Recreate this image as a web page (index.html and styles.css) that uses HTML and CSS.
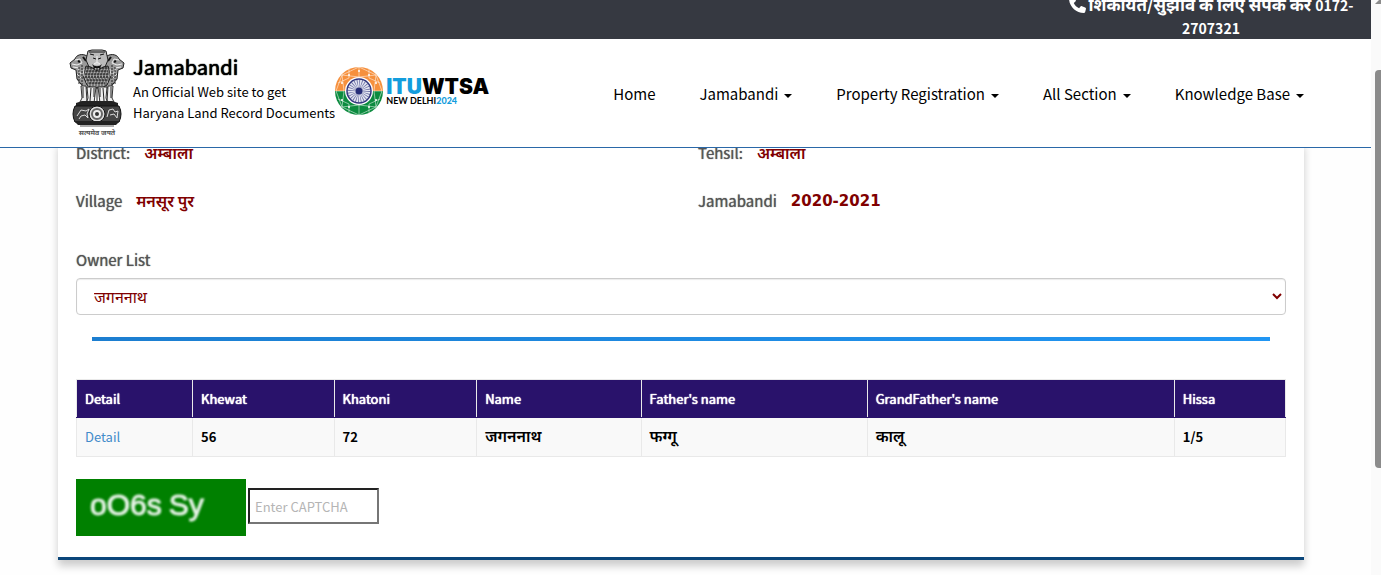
FILE: index.html
```html
<!DOCTYPE html>
<html lang="en">
<head>
    <meta charset="UTF-8">
    <meta name="viewport" content="width=device-width, initial-scale=1.0">
    <title>Jamabandi</title>
    <link rel="stylesheet" href="styles.css">
</head>
<body>
    <div class="page">
        <header class="site-header">
            <div class="topbar">
                <p class="helpline">
                    <svg class="phone" viewBox="0 0 512 512" aria-hidden="true"><path d="M164.900 24.600c-7.700-18.600-28-28.500-47.400-23.200l-88 24C12.100 30.200 0 46 0 64c0 247.400 200.600 448 448 448 18 0 33.800-12.100 38.600-29.500l24-88c5.300-19.400-4.600-39.700-23.200-47.400l-96-40c-16.300-6.800-35.200-2.100-46.300 11.600L304.700 368C234.300 334.700 177.300 277.700 144 207.300l49.300-40.300c13.700-11.200 18.400-30 11.600-46.300z"/></svg>शिकायत/सुझाव के लिए संपर्क करें <span class="number">0172-<br>2707321</span>
                </p>
            </div>
            <div class="navbar">
                <a href="#" class="brand">
                    <svg class="emblem" viewBox="0 0 56 88" role="img" aria-label="State Emblem of India">
                        <!-- side lions -->
                        <path d="M18 7C13 4 7 6 6 10L1 14l1 5 5 2 1 9 7 9h8V10z" fill="#999" stroke="#222"/>
                        <path d="M38 7c5-3 11-1 12 3l5 4-1 5-5 2-1 9-7 9h-8V10z" fill="#999" stroke="#222"/>
                        <path d="M6 11l5-1 2 4-5 2-5-1M50 11l-5-1-2 4 5 2 5-1M4 18l6 1M52 18l-6 1" fill="none" stroke="#eee"/>
                        <path d="M9 12l2 1M47 12l-2 1M14 8l3 4M42 8l-3 4" stroke="#111" stroke-width="2"/>
                        <!-- centre lion -->
                        <path d="M19 2l4-1h10l4 1 2 9-3 7-8 3-8-3-3-7z" fill="#bbb" stroke="#222"/>
                        <path d="M20 3h16M21 5l4 1M35 5l-4 1M24 9l3 1M32 9l-3 1" stroke="#111" fill="none"/>
                        <path d="M28 7v6l-3 2h6l-3-2" stroke="#eee" fill="none"/>
                        <path d="M23 15c3 3 7 3 10 0l-2 4h-6z" fill="#111"/>
                        <path d="M17 17l5 1 6 4 6-4 5-1 3 10-4 9-5 3H23l-5-3-4-9z" fill="#777" stroke="#222"/>
                        <path d="M9 20l3 5M8 25l5 5M15 20l-1 7M47 20l-3 5M48 25l-5 5M41 20l1 7" stroke="#ddd" fill="none"/>
                        <path d="M10 18v18M13 16v23M43 16v23M46 18v18" stroke="#222" stroke-dasharray="2 1"/>
                        <path d="M17 21h22M16 24h24M15 27h26M16 30h24M17 33h22M19 36h18" stroke="#ddd" stroke-dasharray="1 2"/>
                        <path d="M18 19h20M17 22h22M16 25h24M16 28h24M18 31h20M20 34h16" stroke="#111" stroke-dasharray="2 1"/>
                        <!-- legs -->
                        <path d="M12 37h5l1 16h-7l2-4zM39 37h5l-1 12 2 4h-7zM18 38h9l-2 16h-8l2-5zM29 38h9l-1 11 2 5h-8z" fill="#eee" stroke="#333"/>
                        <path d="M14 38v11M22 39l-1 13M25 39v9M31 39v9M34 39l1 13M42 38v11M28 38v15" stroke="#222" fill="none"/>
                        <!-- abacus with the wheel -->
                        <path d="M7 54l6-2h30l6 2v4H7z" fill="#222"/>
                        <path d="M6 57h44q4 8 0 16H6Q2 65 6 57z" fill="#444" stroke="#111"/>
                        <path d="M8 67l4-6 5 1 3-2-2 5 1 4-3-3-4 1-2 3M38 68l2-7 4-1 2 3 3-1-1 7-3-4-4 1" fill="none" stroke="#ddd"/>
                        <circle cx="28" cy="65" r="8" fill="#ddd" stroke="#111"/>
                        <circle cx="28" cy="65" r="5" fill="#eee" stroke="#666" stroke-width="2"/>
                        <circle cx="28" cy="65" r="2" fill="#333"/>
                        <path d="M5 72h46l-4 4H9z" fill="#222"/>
                        <path d="M11 77h34" stroke="#aaa" stroke-width="2"/>
                        <text x="28" y="86" text-anchor="middle">सत्यमेव जयते</text>
                    </svg>
                    <span class="brand-text">
                        <strong>Jamabandi</strong>
                        <span>An Official Web site to get</span>
                        <span>Haryana Land Record Documents</span>
                    </span>
                </a>
                <a href="#" class="itu">
                    <svg class="itu-wheel" viewBox="0 0 48 48" aria-hidden="true">
                        <path d="M0 24a24 24 0 0 1 48 0z" fill="#f6903d"/>
                        <path d="M0 24a24 24 0 0 0 48 0z" fill="#0c8b3f"/>
                        <path d="M24 0L7 8 1 24l6 16 17 8 17-8 6-16-6-16zM7 8l17 2 17-2-2 16 2 16-17-2-17 2 2-16zM24 0v10M24 38v10M1 24h8M39 24h8M14 2l0 9L3 16M34 2v9l11 5M14 46v-9L3 32M34 46v-9l11-5" fill="none" stroke="#fff" stroke-opacity=".5"/>
                        <g fill="#fff"><circle cx="24" cy="4" r="1"/><circle cx="14" cy="8" r="1"/><circle cx="34" cy="8" r="1"/><circle cx="7" cy="16" r="1"/><circle cx="41" cy="16" r="1"/><circle cx="7" cy="33" r="1"/><circle cx="41" cy="33" r="1"/><circle cx="14" cy="40" r="1"/><circle cx="34" cy="40" r="1"/></g>
                        <circle cx="24" cy="24" r="14" fill="#fff"/>
                        <circle cx="24" cy="24" r="12" fill="#e4e6f2" stroke="#32377e" stroke-width="1.500"/>
                        <circle cx="24" cy="24" r="7" fill="none" stroke="#32377e" stroke-opacity=".7" stroke-width="9" stroke-dasharray=".6 1.232"/>
                        <circle cx="24" cy="24" r="3.500" fill="#262d78"/>
                    </svg>
                    <span class="itu-text">
                        <span class="itu-name"><b>ITU</b>WTSA</span>
                        <span class="itu-place">NEW DELHI<b>2024</b></span>
                    </span>
                </a>
                <nav class="menu">
                    <a href="#">Home</a>
                    <a href="#" class="drop">Jamabandi</a>
                    <a href="#" class="drop">Property Registration</a>
                    <a href="#" class="drop">All Section</a>
                    <a href="#" class="drop">Knowledge Base</a>
                </nav>
            </div>
        </header>

        <main class="card">
            <div class="details">
                <p><span class="label">District:</span><strong>अम्बाला</strong></p>
                <p><span class="label">Tehsil:</span><strong>अम्बाला</strong></p>
                <p><span class="label">Village</span><strong>मनसूर पुर</strong></p>
                <p><span class="label">Jamabandi</span><strong class="year">2020-2021</strong></p>
            </div>

            <label class="label owner-label" for="owner">Owner List</label>
            <select id="owner" name="owner">
                <option>जगननाथ</option>
            </select>

            <hr>

            <table>
                <colgroup>
                    <col class="col-detail">
                    <col class="col-khewat">
                    <col class="col-khatoni">
                    <col class="col-name">
                    <col class="col-father">
                    <col class="col-grandfather">
                    <col>
                </colgroup>
                <thead>
                    <tr>
                        <th>Detail</th>
                        <th>Khewat</th>
                        <th>Khatoni</th>
                        <th>Name</th>
                        <th>Father's name</th>
                        <th>GrandFather's name</th>
                        <th>Hissa</th>
                    </tr>
                </thead>
                <tbody>
                    <tr>
                        <td><a href="#">Detail</a></td>
                        <td>56</td>
                        <td>72</td>
                        <td class="hindi">जगननाथ</td>
                        <td class="hindi">फग्गू</td>
                        <td class="hindi">कालू</td>
                        <td>1/5</td>
                    </tr>
                </tbody>
            </table>

            <div class="captcha">
                <div class="captcha-code"><span>oO6s</span><span>Sy</span></div>
                <input type="text" name="captcha" placeholder="Enter CAPTCHA" aria-label="Enter CAPTCHA" autofocus>
            </div>
        </main>
    </div>

    <div class="scrollbar" aria-hidden="true">
        <div class="scroll-arrow"></div>
        <div class="scroll-thumb"></div>
    </div>
</body>
</html>
```

FILE: styles.css
```css
* {
    box-sizing: border-box;
}
body {
    margin: 0;
    min-height: 100vh;
    display: flex;
    background-color: #fefefe;
    color: #000;
    font-family: "Noto Sans CJK SC", "Noto Sans Devanagari", "Noto Sans", sans-serif;
    font-size: 15px;
    line-height: 20px;
}
p {
    margin: 0;
}
a {
    color: #000;
    text-decoration: none;
}
.page {
    flex: 1;
    min-width: 0;
}

/* header */
.site-header {
    position: sticky;
    top: 0;
    z-index: 2;
    background-color: #fff;
    border-bottom: 1px solid #2a68a8;
}
.topbar {
    height: 39px;
    display: flex;
    justify-content: flex-end;
    align-items: flex-end;
    overflow: hidden;
    background-color: #363941;
}
.helpline {
    width: 320px;
    color: #fff;
    font-size: 17px;
    font-weight: bold;
    line-height: 22px;
    text-align: center;
}
.number {
    font-size: 14px;
}
.phone {
    width: 17px;
    height: 17px;
    margin-right: 3px;
    fill: #fff;
    vertical-align: -2px;
}
.navbar {
    height: 108px;
    padding: 0 67px 0 69px;
    display: flex;
    align-items: center;
}
.brand {
    display: flex;
    gap: 8px;
}
.emblem {
    width: 56px;
    height: 88px;
}
.emblem text {
    font-size: 7px;
    font-weight: bold;
    fill: #555;
}
.brand-text {
    display: flex;
    flex-direction: column;
    padding-top: 4px;
    font-size: 13px;
    line-height: 21px;
    white-space: nowrap;
}
.brand-text strong {
    font-size: 20px;
    font-weight: normal;
    line-height: 28px;
    text-shadow: 0 0 1px #000, 0 0 1px #000;
}
.itu {
    display: flex;
    align-items: center;
    gap: 3px;
    margin-bottom: 4px;
}
.itu-wheel {
    width: 48px;
    height: 48px;
}
.itu-text {
    display: flex;
    flex-direction: column;
    padding-top: 4px;
    font-family: Lato, sans-serif;
}
.itu-text b {
    color: #139ddd;
    font-weight: 900;
}
.itu-name,
.itu-name b {
    font-family: Inter, sans-serif;
    font-size: 21px;
    font-weight: 900;
    line-height: 16px;
}
.itu-place {
    font-size: 9px;
    font-weight: bold;
    line-height: 12px;
}
.menu {
    margin-left: auto;
    padding-top: 2px;
    display: flex;
    gap: 44px;
    white-space: nowrap;
}
.drop::after {
    content: "";
    display: inline-block;
    margin-left: 6px;
    vertical-align: 2px;
    border: 4px solid transparent;
    border-top-color: #000;
    border-bottom: 0;
}

/* record */
.card {
    margin: -7px 67px 0 58px;
    padding: 0 18px 21px;
    background-color: #fff;
    border-bottom: 3px solid #0b467a;
    box-shadow: 0 6px 8px rgba(0, 0, 0, .2);
}
.details {
    display: grid;
    grid-template-columns: 622px 1fr;
    row-gap: 24px;
    line-height: 24px;
}
.details p {
    display: flex;
    gap: 14px;
}
.label {
    color: #555;
    text-shadow: 0 0 1px #555;
}
.details strong {
    color: #800000;
    font-size: 16px;
    font-weight: 600;
    line-height: 22px;
}
.details .year {
    font-family: "DejaVu Sans", sans-serif;
    font-size: 15px;
    font-weight: bold;
    line-height: 25px;
}
.owner-label {
    display: block;
    margin-top: 36px;
}
select {
    display: block;
    width: 100%;
    height: 37px;
    margin-top: 8px;
    padding: 0 0 2px 13px;
    border: 1px solid #ccc;
    border-radius: 4px;
    background-color: #fff;
    box-shadow: inset 0 1px 1px rgba(0, 0, 0, .08);
    color: #800000;
    font-family: inherit;
    font-size: 16px;
}
hr {
    height: 4px;
    margin: 22px 16px 38px;
    border: 0;
    background-image: linear-gradient(to right, #1c7ed0, #2196f3);
}
table {
    width: 100%;
    table-layout: fixed;
    border-collapse: collapse;
    font-size: 13px;
    font-weight: bold;
}
th,
td {
    height: 39px;
    padding: 0 8px;
    border: 1px solid #e9e9e9;
    text-align: left;
}
th {
    height: 38px;
    background-color: #29126b;
    border-bottom-color: #29126b;
    color: #fff;
    font-weight: normal;
    text-shadow: 0 0 1px #fff, 0 0 1px #fff;
}
td {
    background-color: #f9f9f9;
}
td a {
    color: #428bca;
    font-weight: normal;
}
.hindi {
    padding-bottom: 5px;
    font-size: 16px;
    font-weight: 600;
}
.col-detail {
    width: 9.6%;
}
.col-khewat {
    width: 11.7%;
}
.col-khatoni {
    width: 11.8%;
}
.col-name {
    width: 13.6%;
}
.col-father {
    width: 18.7%;
}
.col-grandfather {
    width: 25.4%;
}

/* captcha */
.captcha {
    margin-top: 22px;
    display: flex;
    align-items: center;
    gap: 2px;
}
.captcha-code {
    width: 170px;
    height: 57px;
    padding: 9px 14px;
    display: flex;
    gap: 7px;
    background-color: #008000;
    color: #e4f2e4;
    font-family: "Liberation Sans", Arial, sans-serif;
    font-size: 30px;
    line-height: 34px;
    -webkit-text-stroke: 1px #e4f2e4;
}
.captcha-code span {
    filter: blur(1px);
}
.captcha input {
    width: 131px;
    height: 36px;
    margin-bottom: 3px;
    padding: 0 5px;
    border: 2px solid;
    border-color: #222 #767676 #767676 #222;
    outline: 0;
    font-family: inherit;
    font-size: 13px;
}
.captcha input::placeholder {
    color: #b5b5b5;
}

/* scrollbar */
.scrollbar {
    width: 10px;
    padding-left: 4px;
    background-color: #fafafa;
}
.scroll-arrow {
    height: 4px;
    margin-bottom: 66px;
    border-left: 4px solid transparent;
    border-bottom: 4px solid #8b8b8b;
}
.scroll-thumb {
    height: 398px;
    border-radius: 4px 0 0 4px;
    background-color: #8b8b8b;
}
```
